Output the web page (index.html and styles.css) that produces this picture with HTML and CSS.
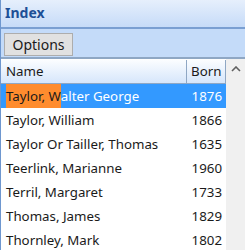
FILE: index.html
```html
<!DOCTYPE html>
<html lang="en">
<head>
    <meta charset="UTF-8">
    <title>Index</title>
    <link rel="stylesheet" href="styles.css">
</head>
<body>
    <div class="panel">
        <!-- Title bar -->
        <div class="title-bar">Index</div>

        <!-- Toolbar -->
        <div class="toolbar">
            <button class="btn">Options</button>
        </div>

        <!-- List with scrollbar -->
        <div class="list-wrap">
            <div class="list">
                <div class="row header">
                    <div class="col-name">Name</div>
                    <div class="col-born">Born</div>
                </div>
                <div class="row selected">
                    <div class="col-name"><span class="match">Taylor, W</span>alter George</div>
                    <div class="col-born">1876</div>
                </div>
                <div class="row">
                    <div class="col-name">Taylor, William</div>
                    <div class="col-born">1866</div>
                </div>
                <div class="row">
                    <div class="col-name">Taylor Or Tailler, Thomas</div>
                    <div class="col-born">1635</div>
                </div>
                <div class="row">
                    <div class="col-name">Teerlink, Marianne</div>
                    <div class="col-born">1960</div>
                </div>
                <div class="row">
                    <div class="col-name">Terril, Margaret</div>
                    <div class="col-born">1733</div>
                </div>
                <div class="row">
                    <div class="col-name">Thomas, James</div>
                    <div class="col-born">1829</div>
                </div>
                <div class="row">
                    <div class="col-name">Thornley, Mark</div>
                    <div class="col-born">1802</div>
                </div>
            </div>
            <div class="scrollbar">
                <svg class="arrow" width="10" height="6" viewBox="0 0 10 6">
                    <path d="M1 5 L5 1 L9 5" fill="none" stroke="#606060" stroke-width="1.6"/>
                </svg>
            </div>
        </div>
    </div>
</body>
</html>
```

FILE: styles.css
```css
body {
    margin: 0;
    padding: 0;
    font-family: "Noto Sans", "Open Sans", sans-serif;
    font-size: 13.3px;
    color: #1a1a1a;
    background-color: #ffffff;
}

.panel {
    width: 245px;
    height: 250px;
    overflow: hidden;
    border-left: 1px solid #6e97cf;
    box-sizing: border-box;
}

/* Title bar */
.title-bar {
    height: 27px;
    line-height: 26px;
    padding-left: 4px;
    font-weight: bold;
    font-size: 14px;
    color: #1d4f96;
    background: linear-gradient(#e6effc, #c6dbf8);
    border-bottom: 2px solid #7a9fd2;
}

/* Toolbar */
.toolbar {
    height: 30px;
    padding: 4px 3px 0;
    box-sizing: border-box;
    background-color: #c4dbf9;
    border-bottom: 2px solid #8fa7c4;
}

.btn {
    height: 23px;
    width: 69px;
    padding: 0;
    font-family: "Noto Sans", "Open Sans", sans-serif;
    font-size: 14px;
    color: #1a1a1a;
    background-color: #e1e1e1;
    border: 1px solid #adadad;
}

/* List */
.list-wrap {
    display: flex;
}

.list {
    flex: 1;
    border-top: 1px solid #ffffff;
}

.scrollbar {
    width: 19px;
    background-color: #f0f0f0;
    display: flex;
    justify-content: center;
    padding-top: 7px;
    box-sizing: border-box;
}

.row {
    display: flex;
    height: 24px;
    line-height: 24px;
}

.col-name {
    flex: 1;
    padding-left: 5px;
    white-space: nowrap;
    overflow: hidden;
}

.col-born {
    width: 40px;
    padding-right: 4px;
    text-align: right;
    box-sizing: border-box;
}

.header {
    height: 23px;
    line-height: 22px;
    background: linear-gradient(#fbfdff, #d6e6fb);
    border-bottom: 1px solid #8fa7c4;
}

.header .col-born {
    text-align: left;
    padding-left: 4px;
    border-left: 1px solid #8fa7c4;
    border-right: 1px solid #8fa7c4;
}

.selected {
    background-color: #3399ff;
    color: #ffffff;
}

.match {
    background-color: #ff8c2e;
    color: #1a1a1a;
    display: inline-block;
}
```
